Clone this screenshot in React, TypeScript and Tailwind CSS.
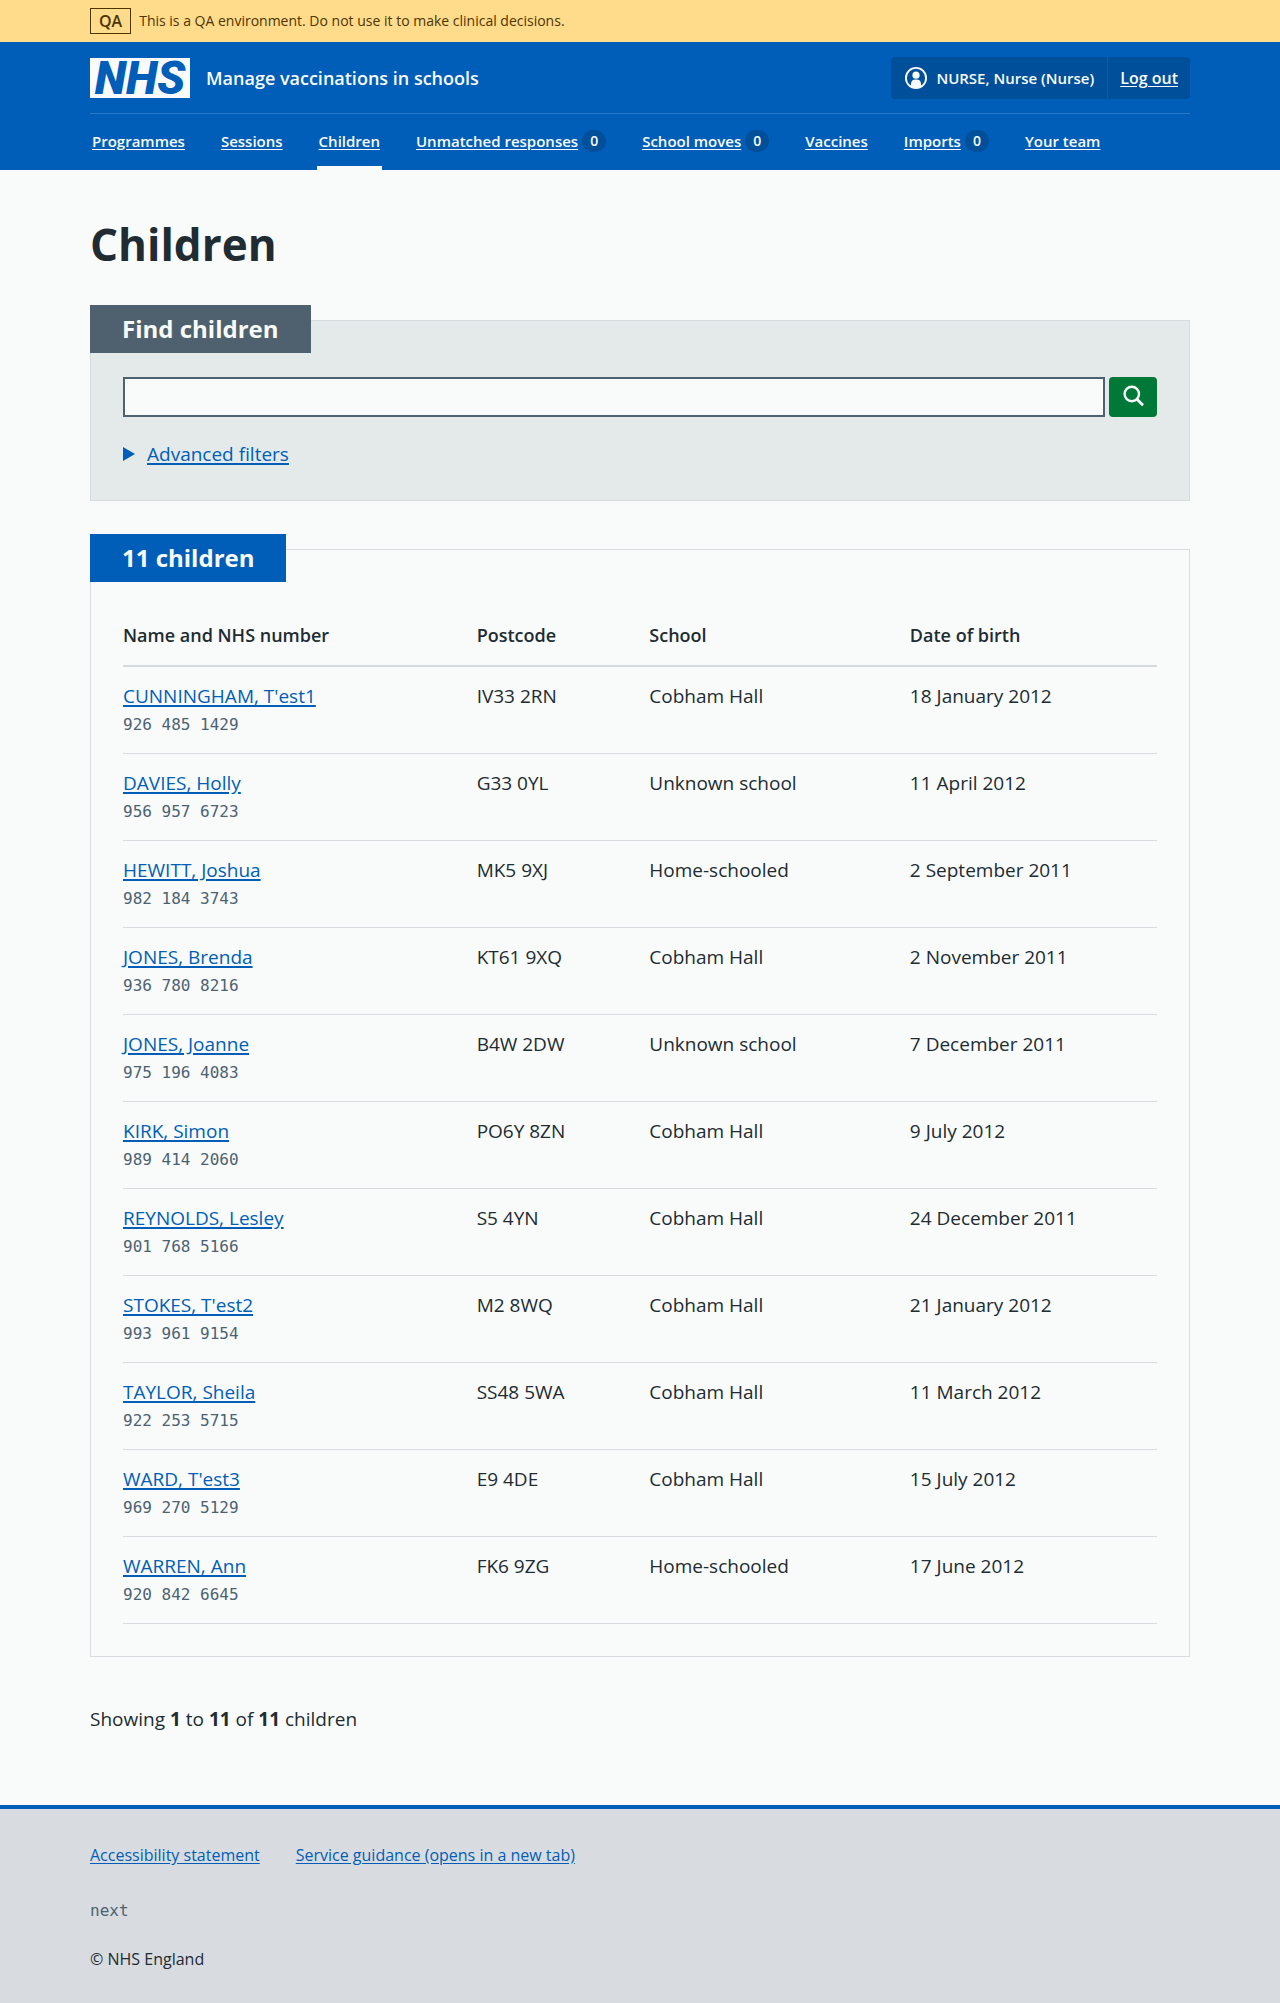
import type { ReactNode } from "react";

type Child = {
  name: string;
  nhsNumber: string;
  postcode: string;
  school: string;
  dob: string;
};

const children: Child[] = [
  { name: "CUNNINGHAM, T'est1", nhsNumber: "926 485 1429", postcode: "IV33 2RN", school: "Cobham Hall", dob: "18 January 2012" },
  { name: "DAVIES, Holly", nhsNumber: "956 957 6723", postcode: "G33 0YL", school: "Unknown school", dob: "11 April 2012" },
  { name: "HEWITT, Joshua", nhsNumber: "982 184 3743", postcode: "MK5 9XJ", school: "Home-schooled", dob: "2 September 2011" },
  { name: "JONES, Brenda", nhsNumber: "936 780 8216", postcode: "KT61 9XQ", school: "Cobham Hall", dob: "2 November 2011" },
  { name: "JONES, Joanne", nhsNumber: "975 196 4083", postcode: "B4W 2DW", school: "Unknown school", dob: "7 December 2011" },
  { name: "KIRK, Simon", nhsNumber: "989 414 2060", postcode: "PO6Y 8ZN", school: "Cobham Hall", dob: "9 July 2012" },
  { name: "REYNOLDS, Lesley", nhsNumber: "901 768 5166", postcode: "S5 4YN", school: "Cobham Hall", dob: "24 December 2011" },
  { name: "STOKES, T'est2", nhsNumber: "993 961 9154", postcode: "M2 8WQ", school: "Cobham Hall", dob: "21 January 2012" },
  { name: "TAYLOR, Sheila", nhsNumber: "922 253 5715", postcode: "SS48 5WA", school: "Cobham Hall", dob: "11 March 2012" },
  { name: "WARD, T'est3", nhsNumber: "969 270 5129", postcode: "E9 4DE", school: "Cobham Hall", dob: "15 July 2012" },
  { name: "WARREN, Ann", nhsNumber: "920 842 6645", postcode: "FK6 9ZG", school: "Home-schooled", dob: "17 June 2012" },
];

type NavItem = { label: string; count?: number; current?: boolean };

const navItems: NavItem[] = [
  { label: "Programmes" },
  { label: "Sessions" },
  { label: "Children", current: true },
  { label: "Unmatched responses", count: 0 },
  { label: "School moves", count: 0 },
  { label: "Vaccines" },
  { label: "Imports", count: 0 },
  { label: "Your team" },
];

function Container({ className = "", children }: { className?: string; children: ReactNode }) {
  return <div className={`mx-auto w-full max-w-[1164px] px-8 ${className}`}>{children}</div>;
}

function EnvironmentBanner() {
  return (
    <div className="bg-[#ffdb8c] text-[#4d3500]">
      <Container className="flex items-center gap-2 py-2">
        <strong className="border border-[#4d3500] px-2 text-base leading-6 font-semibold">QA</strong>
        <span className="text-sm">This is a QA environment. Do not use it to make clinical decisions.</span>
      </Container>
    </div>
  );
}

function Logo() {
  return (
    <a
      href="#home"
      aria-label="NHS home"
      className="block w-[100px] bg-[#f9fbfa] text-center font-['Roboto',sans-serif] text-[46px] leading-10 font-black text-[#005eb8] italic"
    >
      NHS
    </a>
  );
}

function UserIcon() {
  return (
    <svg viewBox="0 0 24 24" className="size-6" aria-hidden="true">
      <circle cx="12" cy="12" r="10.1" fill="none" stroke="currentColor" strokeWidth="1.9" />
      <circle cx="12" cy="9.2" r="3.6" fill="currentColor" />
      <path d="M7 20.8v-3a4.6 4.6 0 0 1 4.6-4.4h.8a4.6 4.6 0 0 1 4.6 4.4v3a10 10 0 0 1-10 0Z" fill="currentColor" />
    </svg>
  );
}

function Header() {
  return (
    <header className="bg-[#005eb8] text-[#f9fbfa]">
      <Container>
        <div className="flex items-center justify-between border-b border-[#2c79c5] pt-[15px] pb-[14px]">
          <div className="flex items-center gap-4">
            <Logo />
            <a href="#home" className="text-lg font-semibold">
              Manage vaccinations in schools
            </a>
          </div>
          <div className="flex h-[42px] items-stretch rounded bg-[#004f9a] font-semibold">
            <span className="flex items-center gap-2 border-r border-[#005eb8] px-[13px] text-[15px]">
              <UserIcon />
              NURSE, Nurse (Nurse)
            </span>
            <span className="flex items-center px-3 text-base">
              <a href="#log-out" className="underline underline-offset-2">
                Log out
              </a>
            </span>
          </div>
        </div>
        <nav aria-label="Menu" className="flex gap-8 text-[15px] font-semibold">
          {navItems.map((item) => (
            <a
              key={item.label}
              href={`#${item.label}`}
              aria-current={item.current ? "page" : undefined}
              className={
                item.current
                  ? "flex h-14 items-center gap-1 border-y-4 border-t-transparent border-b-[#f9fbfa] px-0.5 pb-0.5"
                  : "flex h-14 items-center gap-1 px-0.5 pb-0.5"
              }
            >
              <span className="underline underline-offset-2">{item.label}</span>
              {item.count !== undefined && (
                <span className="flex h-[22px] w-6 items-center justify-center rounded-full bg-[#004f9a] text-sm">
                  {item.count}
                </span>
              )}
            </a>
          ))}
        </nav>
      </Container>
    </header>
  );
}

function Card({
  title,
  cardClass,
  headingClass,
  children,
}: {
  title: string;
  cardClass: string;
  headingClass: string;
  children: ReactNode;
}) {
  return (
    <section className={`border border-[#d5dbde] px-8 pb-8 ${cardClass}`}>
      <h2
        className={`-mt-4 -ml-[33px] w-fit px-8 text-2xl leading-[48px] font-bold text-[#f9fbfa] ${headingClass}`}
      >
        {title}
      </h2>
      {children}
    </section>
  );
}

function SearchCard() {
  return (
    <Card title="Find children" cardClass="bg-[#e4e9e9]" headingClass="bg-[#4f616f]">
      <form role="search" className="mt-6 flex gap-1">
        <input
          type="search"
          aria-label="Search children"
          className="h-10 min-w-0 flex-1 border-2 border-[#4c6272] bg-[#f9fbfa] px-2 text-[19px]"
        />
        <button
          type="submit"
          aria-label="Search"
          className="flex h-10 w-12 items-center justify-center rounded bg-[#007838] text-[#f9fbfa]"
        >
          <svg viewBox="0 0 24 24" className="size-6" fill="none" stroke="currentColor" strokeWidth="2.4" aria-hidden="true">
            <circle cx="10.8" cy="9" r="7.2" />
            <path d="m16 14.2 6 6" strokeWidth="2.8" />
          </svg>
        </button>
      </form>
      <details className="mt-[23px] text-[19px] leading-7 text-[#005eb8]">
        <summary className="flex w-fit cursor-pointer list-none items-center gap-3">
          <svg viewBox="0 0 12 14" className="h-[14px] w-3" fill="currentColor" aria-hidden="true">
            <path d="M0 0 12 7 0 14Z" />
          </svg>
          <span className="underline decoration-2 underline-offset-2">Advanced filters</span>
        </summary>
      </details>
    </Card>
  );
}

function ResultsCard() {
  return (
    <Card title="11 children" cardClass="mt-12" headingClass="bg-[#005eb8]">
      <table className="mt-[31px] w-full table-fixed text-left text-[19px] leading-7">
        <colgroup>
          <col className="w-[34.2%]" />
          <col className="w-[16.7%]" />
          <col className="w-[25.2%]" />
          <col className="w-[23.9%]" />
        </colgroup>
        <thead>
          <tr className="border-b-2 border-[#d5dbde] text-[18px]">
            <th className="pt-2 pb-4 font-semibold">Name and NHS number</th>
            <th className="pt-2 pb-4 font-semibold">Postcode</th>
            <th className="pt-2 pb-4 font-semibold">School</th>
            <th className="pt-2 pb-4 font-semibold">Date of birth</th>
          </tr>
        </thead>
        <tbody>
          {children.map((child) => (
            <tr key={child.nhsNumber} className="border-b border-[#d5dbde] align-top">
              <td className="pt-[15px] pb-[13px]">
                <a
                  href={`#${child.name}`}
                  className="block w-fit text-[#005eb8] underline decoration-2 underline-offset-2"
                >
                  {child.name}
                </a>
                <span className="block font-['DejaVu_Sans_Mono',monospace] text-base leading-[30px] text-[#4c6272]">
                  {child.nhsNumber}
                </span>
              </td>
              <td className="pt-[15px]">{child.postcode}</td>
              <td className="pt-[15px]">{child.school}</td>
              <td className="pt-[15px]">{child.dob}</td>
            </tr>
          ))}
        </tbody>
      </table>
    </Card>
  );
}

function Footer() {
  return (
    <footer className="flex-1 border-t-4 border-[#005eb8] bg-[#d8dce0] text-base">
      <Container className="pt-[34px] pb-6">
        <ul className="flex gap-9 text-[#005eb8]">
          <li>
            <a href="#accessibility" className="underline underline-offset-2">
              Accessibility statement
            </a>
          </li>
          <li>
            <a href="#guidance" className="underline underline-offset-2">
              Service guidance (opens in a new tab)
            </a>
          </li>
        </ul>
        <p className="mt-8 font-['DejaVu_Sans_Mono',monospace] text-[#4c6272]">next</p>
        <p className="mt-6">© NHS England</p>
      </Container>
    </footer>
  );
}

export default function App() {
  return (
    <div className="flex min-h-screen flex-col bg-[#f9fbfa] font-['Open_Sans','Noto_Sans',sans-serif] text-[#212b32]">
      <EnvironmentBanner />
      <Header />
      <main className="mb-[72px]">
        <Container className="pt-[42px]">
          <h1 className="mb-11 text-[44px] leading-[64px] font-bold">Children</h1>
          <SearchCard />
          <ResultsCard />
          <p className="mt-12 text-[19px] leading-7">
            Showing <b>1</b> to <b>11</b> of <b>11</b> children
          </p>
        </Container>
      </main>
      <Footer />
    </div>
  );
}
